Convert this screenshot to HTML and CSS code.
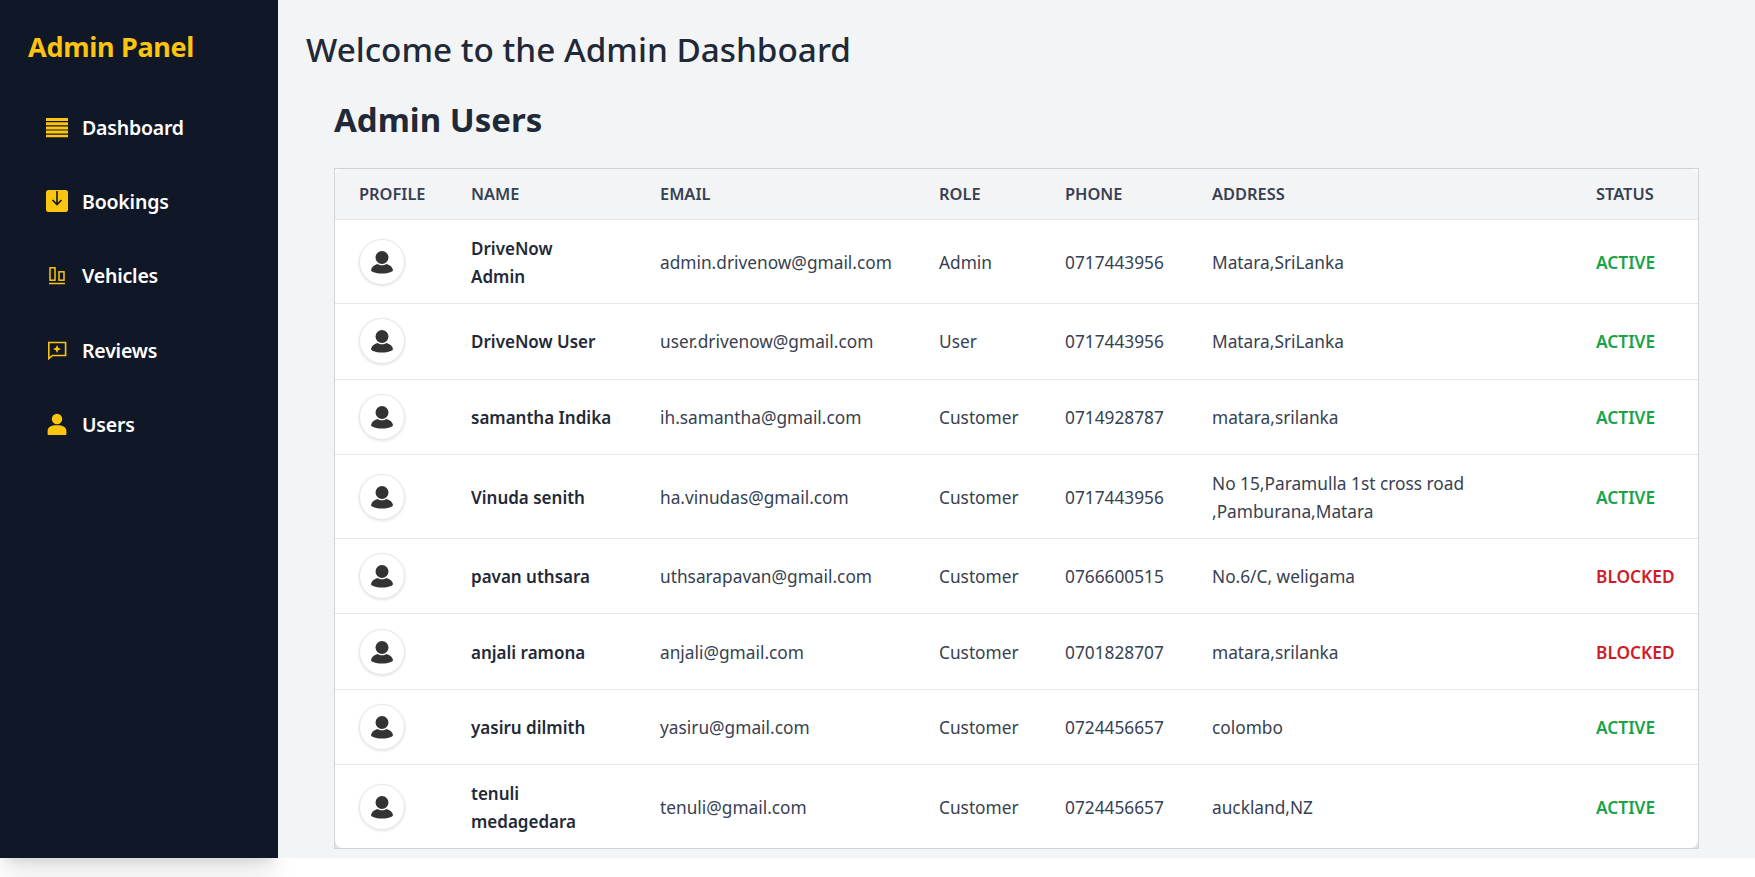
FILE: index.html
```html
<!DOCTYPE html>
<html lang="en">
<head>
  <meta charset="UTF-8">
  <title>Admin Users</title>
  <link rel="stylesheet" href="styles.css">
</head>
<body>
  <div class="layout">

    <!-- SIDEBAR -->
    <aside class="sidebar">
      <h2 class="brand">Admin Panel</h2>
      <nav class="nav">
        <a class="nav-item" href="#">
          <svg class="nav-icon" viewBox="0 0 22 22"><path fill="currentColor" d="M0 2h22v3H0zM0 6.200h22v3H0zM0 10.400h22v3H0zM0 14.600h22v3H0zM0 18.800h22v2.400H0z"/></svg>
          Dashboard
        </a>
        <a class="nav-item" href="#">
          <svg class="nav-icon" viewBox="0 0 22 22"><rect width="22" height="22" rx="2.500" fill="currentColor"/><path fill="none" stroke="#101827" stroke-width="1.600" d="M11 1v13M6.500 10l4.500 4.500 4.500-4.500"/></svg>
          Bookings
        </a>
        <a class="nav-item" href="#">
          <svg class="nav-icon" viewBox="0 0 22 22" fill="none" stroke="currentColor" stroke-width="1.500"><rect x="4" y="2.800" width="5" height="12.400"/><rect x="13" y="6.800" width="5" height="8.400"/><path d="M3 18.500h16"/></svg>
          Vehicles
        </a>
        <a class="nav-item" href="#">
          <svg class="nav-icon" viewBox="0 0 22 22"><path fill="none" stroke="currentColor" stroke-width="1.600" d="M2.800 3.500h16.800v13H6.500l-3.700 3z"/><path fill="currentColor" d="M11 6l1.200 2.800 2.800 1.200-2.800 1.200-1.200 2.800-1.200-2.800-2.800-1.200 2.800-1.200z"/></svg>
          Reviews
        </a>
        <a class="nav-item" href="#">
          <svg class="nav-icon" viewBox="0 0 22 22"><circle cx="11" cy="6" r="5.200" fill="currentColor"/><path fill="currentColor" d="M1.600 21v-3c0-4 3.400-5.800 9.400-5.800s9.400 1.800 9.400 5.800v3c0 .6-.4 1-1 1H2.600c-.6 0-1-.4-1-1z"/></svg>
          Users
        </a>
      </nav>
    </aside>

    <!-- MAIN CONTENT -->
    <main class="main">
      <h1 class="welcome">Welcome to the Admin Dashboard</h1>
      <section class="users">
        <h2 class="users-title">Admin Users</h2>
        <div class="table-wrap">
          <table class="users-table">
            <colgroup>
              <col class="col-profile"><col class="col-name"><col class="col-email"><col class="col-role"><col class="col-phone"><col class="col-address"><col class="col-status">
            </colgroup>
            <thead>
              <tr><th>Profile</th><th>Name</th><th>Email</th><th>Role</th><th>Phone</th><th>Address</th><th>Status</th></tr>
            </thead>
            <tbody>
              <tr class="tall">
                <td><span class="avatar"><svg viewBox="0 0 24 24"><use href="#person"/></svg></span></td>
                <td class="name">DriveNow<br>Admin</td><td>admin.drivenow@gmail.com</td><td>Admin</td><td>0717443956</td><td>Matara,SriLanka</td><td class="active">ACTIVE</td>
              </tr>
              <tr>
                <td><span class="avatar"><svg viewBox="0 0 24 24"><use href="#person"/></svg></span></td>
                <td class="name">DriveNow User</td><td>user.drivenow@gmail.com</td><td>User</td><td>0717443956</td><td>Matara,SriLanka</td><td class="active">ACTIVE</td>
              </tr>
              <tr>
                <td><span class="avatar"><svg viewBox="0 0 24 24"><use href="#person"/></svg></span></td>
                <td class="name">samantha Indika</td><td>ih.samantha@gmail.com</td><td>Customer</td><td>0714928787</td><td>matara,srilanka</td><td class="active">ACTIVE</td>
              </tr>
              <tr class="tall">
                <td><span class="avatar"><svg viewBox="0 0 24 24"><use href="#person"/></svg></span></td>
                <td class="name">Vinuda senith</td><td>ha.vinudas@gmail.com</td><td>Customer</td><td>0717443956</td><td>No 15,Paramulla 1st cross road<br>,Pamburana,Matara</td><td class="active">ACTIVE</td>
              </tr>
              <tr>
                <td><span class="avatar"><svg viewBox="0 0 24 24"><use href="#person"/></svg></span></td>
                <td class="name">pavan uthsara</td><td>uthsarapavan@gmail.com</td><td>Customer</td><td>0766600515</td><td>No.6/C, weligama</td><td class="blocked">BLOCKED</td>
              </tr>
              <tr>
                <td><span class="avatar"><svg viewBox="0 0 24 24"><use href="#person"/></svg></span></td>
                <td class="name">anjali ramona</td><td>anjali@gmail.com</td><td>Customer</td><td>0701828707</td><td>matara,srilanka</td><td class="blocked">BLOCKED</td>
              </tr>
              <tr>
                <td><span class="avatar"><svg viewBox="0 0 24 24"><use href="#person"/></svg></span></td>
                <td class="name">yasiru dilmith</td><td>yasiru@gmail.com</td><td>Customer</td><td>0724456657</td><td>colombo</td><td class="active">ACTIVE</td>
              </tr>
              <tr class="tall last">
                <td><span class="avatar"><svg viewBox="0 0 24 24"><use href="#person"/></svg></span></td>
                <td class="name">tenuli<br>medagedara</td><td>tenuli@gmail.com</td><td>Customer</td><td>0724456657</td><td>auckland,NZ</td><td class="active">ACTIVE</td>
              </tr>
            </tbody>
          </table>
        </div>
      </section>
    </main>
  </div>

  <!-- shared avatar glyph -->
  <svg class="defs" width="0" height="0">
    <symbol id="person" viewBox="0 0 24 24">
      <circle cx="12" cy="7.500" r="6.500" fill="#333"/>
      <path fill="#333" d="M7.500 14C4 15 1.500 17 1 20c-.2 1.500 4 3.500 11 3.500S23.200 21.500 23 20c-.5-3-3-5-6.500-6-1.300 1-2.800 1.300-4.500 1.300s-3.200-.3-4.500-1.300z"/>
    </symbol>
  </svg>
</body>
</html>
```

FILE: styles.css
```css
* {
  box-sizing: border-box;
}

html, body {
  height: 100%;
}

body {
  margin: 0;
  background: #fff;
  font-family: "Noto Sans", "Open Sans", sans-serif;
  color: #1f2937;
}

.layout {
  display: flex;
  height: 858px;
}

.defs {
  display: block;
  height: 0;
}

.sidebar {
  width: 278px;
  flex-shrink: 0;
  background: #101827;
  padding: 27px 28px;
  box-shadow: 0 20px 25px -5px rgba(0,0,0,0.1), 0 8px 10px -6px rgba(0,0,0,0.1);
}

.brand {
  margin: 0 0 23px;
  color: #fbc40f;
  font-size: 27px;
  line-height: 40px;
  font-weight: 700;
  letter-spacing: -0.3px;
}

.nav {
  display: flex;
  flex-direction: column;
}

.nav-item {
  display: flex;
  align-items: center;
  gap: 14px;
  height: 74.300px;
  padding-left: 18px;
  color: #fff;
  font-size: 19.500px;
  font-weight: 600;
  text-decoration: none;
  letter-spacing: -0.2px;
}

.nav-icon {
  width: 22px;
  height: 22px;
  color: #fbc40f;
  flex-shrink: 0;
}

.main {
  flex: 1;
  background: #f3f4f6;
  padding: 25px 56px 0 28px;
  min-width: 0;
}

.welcome {
  margin: 0;
  font-size: 33.300px;
  line-height: 48px;
  font-weight: 500;
  color: #1f2937;
}

.users {
  padding-left: 28px;
}

.users-title {
  margin: 25px 0 26px;
  font-size: 33px;
  line-height: 44px;
  font-weight: 700;
  color: #1f2937;
}

.table-wrap {
  background: linear-gradient(#fbfbfc 50%, #dfe2e6 50%);
  border: 1px solid #d1d5db;
}

.users-table {
  width: 100%;
  border-collapse: separate;
  border-spacing: 0;
  table-layout: fixed;
  font-size: 17.300px;
  line-height: 28px;
  background: #fff;
  border-radius: 8px;
  overflow: hidden;
}

.col-profile { width: 112px; }
.col-name { width: 189px; }
.col-email { width: 279px; }
.col-role { width: 126px; }
.col-phone { width: 147px; }
.col-address { width: 384px; }

.users-table th {
  height: 51px;
  padding: 0 0 0 24px;
  background: #f3f4f6;
  border-bottom: 1px solid #e5e7eb;
  text-align: left;
  font-size: 16.400px;
  font-weight: 600;
  color: #374151;
  text-transform: uppercase;
}

.users-table td {
  height: 75.300px;
  padding: 2px 24px 0;
  border-bottom: 1px solid #e5e7eb;
  color: #374151;
}

.users-table .tall td {
  height: 84.300px;
}

.users-table .last td {
  height: 83px;
  border-bottom: none;
}

.users-table .name {
  font-size: 17px;
  font-weight: 600;
  color: #1f2937;
}

.users-table .active {
  padding-right: 0;
  color: #16a34a;
  font-weight: 600;
}

.users-table .blocked {
  padding-right: 0;
  color: #d01c28;
  font-weight: 600;
}

.avatar {
  display: flex;
  align-items: center;
  justify-content: center;
  width: 46px;
  height: 46px;
  margin-top: -2px;
  background: #fff;
  border: 1px solid #e5e7eb;
  border-radius: 50%;
  box-shadow: 0 1px 3px rgba(0,0,0,0.12);
}

.avatar svg {
  width: 24px;
  height: 24px;
}
```
